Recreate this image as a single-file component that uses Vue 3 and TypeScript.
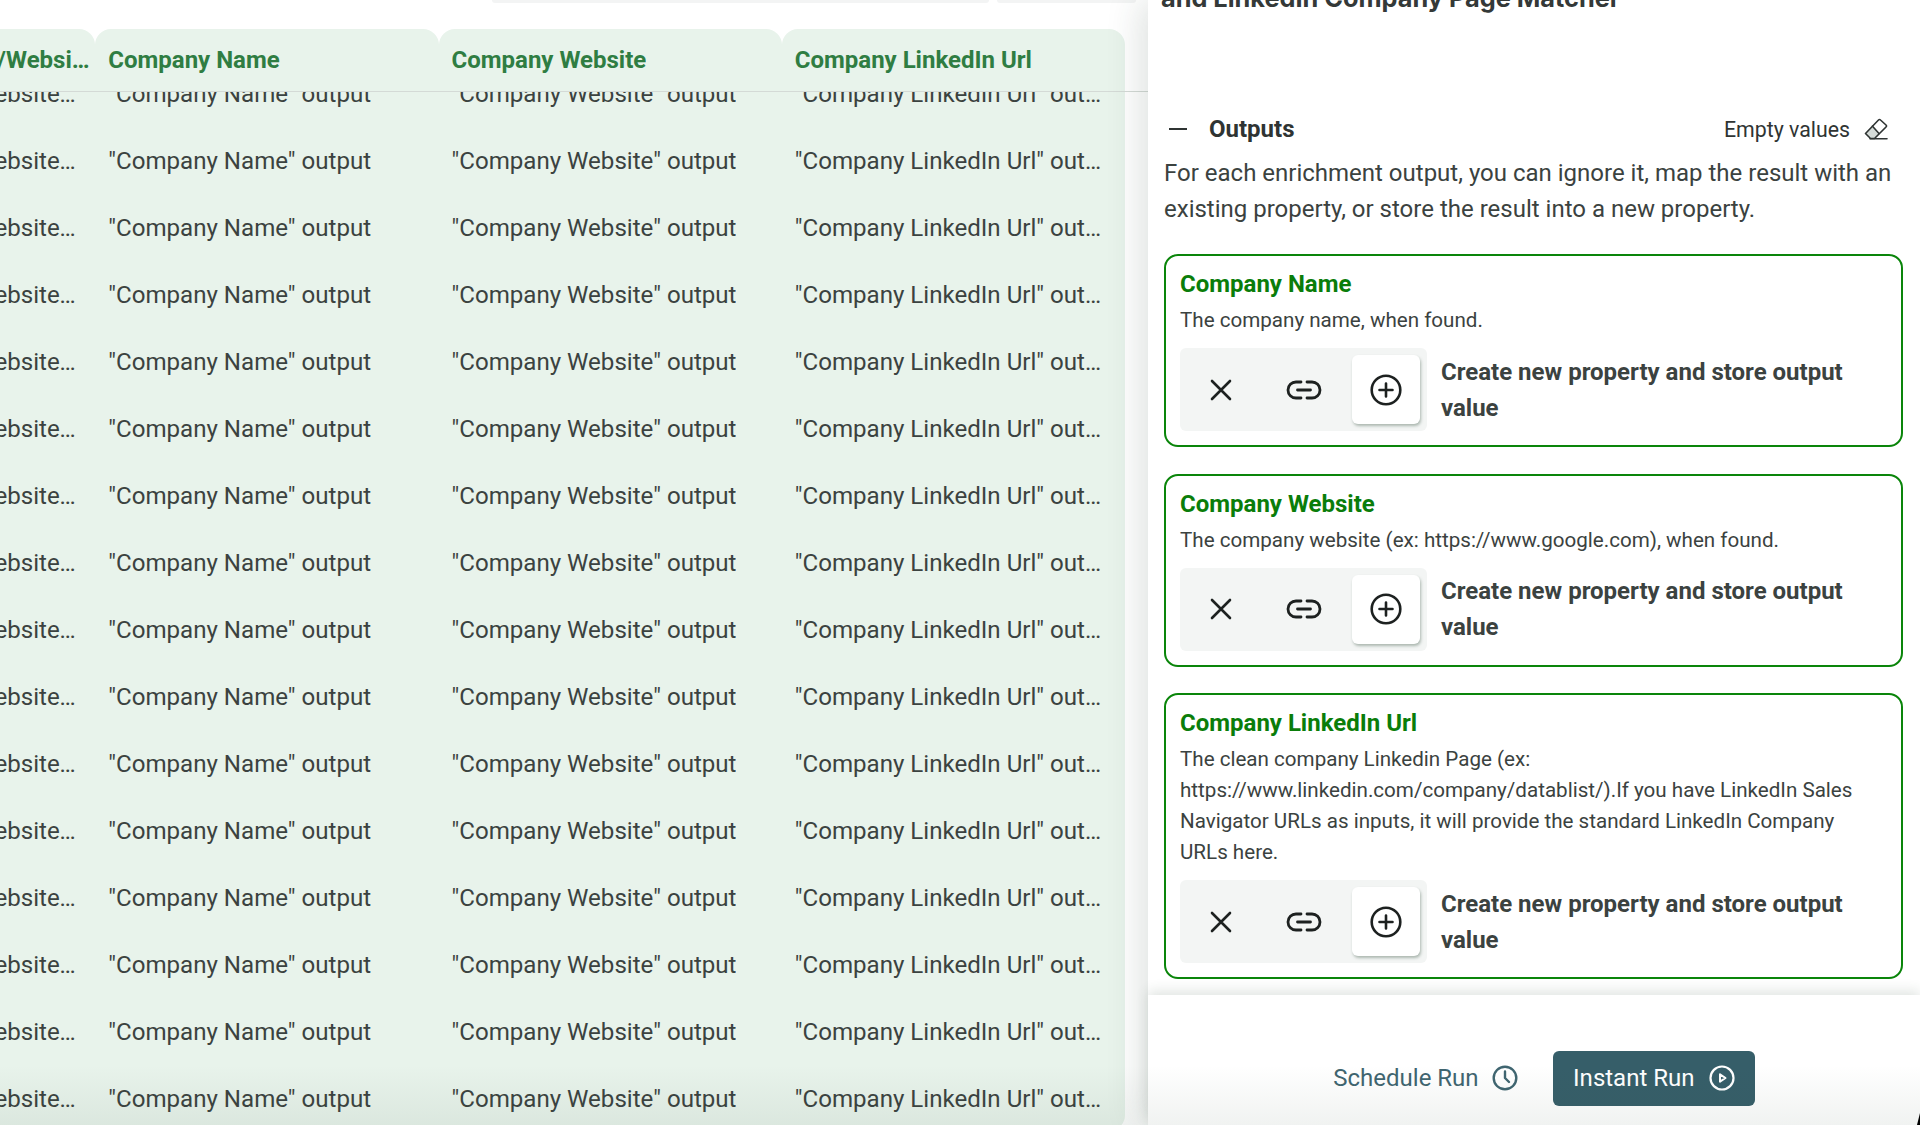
<script setup lang="ts">
const columns = [
  { head: 'Company Uid Domain/Website Address', cell: '"Company Domain/Website" output' },
  { head: 'Company Name', cell: '"Company Name" output' },
  { head: 'Company Website', cell: '"Company Website" output' },
  { head: 'Company LinkedIn Url', cell: '"Company LinkedIn Url" output' },
]
const rows = Array.from({ length: 16 }, (_, i) => i)
const outputs = [
  { title: 'Company Name', desc: 'The company name, when found.' },
  { title: 'Company Website', desc: 'The company website (ex: https://www.google.com), when found.' },
  {
    title: 'Company LinkedIn Url',
    desc: 'The clean company Linkedin Page (ex: https://www.linkedin.com/company/datablist/).If you have LinkedIn Sales Navigator URLs as inputs, it will provide the standard LinkedIn Company URLs here.',
  },
]
</script>

<template>
  <div class="page">
    <section class="left">
      <div class="top-tabs">
        <span class="top-tab one"></span>
        <span class="top-tab two"></span>
      </div>
      <div class="table">
        <div class="head-row">
          <div v-for="c in columns" :key="c.head" class="head-cell">
            <span class="clip head-text">{{ c.head }}</span>
          </div>
        </div>
        <div class="body">
          <div class="body-inner">
            <div v-for="r in rows" :key="r" class="row">
              <div v-for="c in columns" :key="c.head" class="cell">
                <span class="clip">{{ c.cell }}</span>
              </div>
            </div>
          </div>
        </div>
      </div>
    </section>

    <aside class="panel">
      <div class="scroll">
        <h2 class="title">and LinkedIn Company Page Matcher</h2>
        <div class="outputs-head">
          <svg class="minus" width="18" height="4" viewBox="0 0 18 4"><path d="M0 2h18" stroke="#2f3433" stroke-width="2" /></svg>
          <span class="outputs-label">Outputs</span>
          <span class="empty">Empty values</span>
          <svg class="eraser" width="24" height="22" viewBox="0 0 24 22" fill="none">
            <path d="M1.500 15.500 8.500 8.200 15 15.500 10 20.500H6.500z" fill="#d5dbd8" />
            <path d="M1.500 15.500 14.500 2q1-1 2 0L22 7q1 1 0 2L10.500 20.500h-4z" stroke="#2f3433" stroke-width="1.600" stroke-linejoin="round" />
            <path d="m8.500 8.200 6.500 7.300M6 20.700h17" stroke="#2f3433" stroke-width="1.600" stroke-linecap="round" />
          </svg>
        </div>
        <p class="intro">For each enrichment output, you can ignore it, map the result with an existing property, or store the result into a new property.</p>

        <div v-for="o in outputs" :key="o.title" class="card">
          <div class="card-title">{{ o.title }}</div>
          <div class="card-desc">{{ o.desc }}</div>
          <div class="choice">
            <div class="toggle">
              <button class="tbtn" type="button" aria-label="Ignore">
                <svg width="26" height="26" viewBox="0 0 26 26" fill="none"><path d="M4 4l18 18M22 4 4 22" stroke="#1d2120" stroke-width="2.600" stroke-linecap="round" /></svg>
              </button>
              <button class="tbtn" type="button" aria-label="Map">
                <svg width="36" height="24" viewBox="0 0 36 24" fill="none"><path d="M15 4H10a8 8 0 0 0 0 16h5M21 4h5a8 8 0 0 1 0 16h-5M11.500 12h13" stroke="#1d2120" stroke-width="2.800" stroke-linecap="round" /></svg>
              </button>
              <button class="tbtn active" type="button" aria-label="Create">
                <svg width="32" height="32" viewBox="0 0 32 32" fill="none"><circle cx="16" cy="16" r="14.300" stroke="#1d2120" stroke-width="2.600" /><path d="M16 9.500v13M9.500 16h13" stroke="#1d2120" stroke-width="2.600" stroke-linecap="round" /></svg>
              </button>
            </div>
            <div class="choice-text">Create new property and store output value</div>
          </div>
        </div>
      </div>

      <footer class="footer">
        <button class="schedule" type="button">
          Schedule Run
          <svg width="26" height="26" viewBox="0 0 26 26" fill="none"><circle cx="13" cy="13" r="11.300" stroke="#3f6570" stroke-width="2.400" /><path d="M13 6.500V13l4 4" stroke="#3f6570" stroke-width="2.400" stroke-linecap="round" stroke-linejoin="round" /></svg>
        </button>
        <button class="instant" type="button">
          Instant Run
          <svg width="26" height="26" viewBox="0 0 26 26" fill="none"><circle cx="13" cy="13" r="11.500" stroke="#fff" stroke-width="2.200" /><path d="M11 9.300 16.500 13 11 16.700z" stroke="#fff" stroke-width="2" stroke-linejoin="round" /></svg>
        </button>
      </footer>
    </aside>
    <div class="vignette"></div>
    <div class="corner"></div>
  </div>
</template>

<style scoped>
.page {
  position: relative;
  display: flex;
  width: 1920px;
  height: 1125px;
  overflow: hidden;
  background: #fff;
  font-family: Roboto, "Liberation Sans", sans-serif;
  color: #3b4240;
}
.left {
  flex: 0 0 1148px;
  position: relative;
  overflow: hidden;
}
.top-tabs {
  display: flex;
  height: 3px;
  margin-left: 492px;
  gap: 8px;
}
.top-tab {
  display: block;
  height: 3px;
  background: #f3f4f4;
  border-radius: 0 0 6px 6px;
}
.top-tab.one { width: 497px; }
.top-tab.two { width: 139px; }
.table {
  width: 1373px;
  margin: 26px 0 0 -248px;
}
.head-row {
  position: relative;
  z-index: 1;
  display: flex;
  height: 62px;
}
.head-row::after {
  content: "";
  position: absolute;
  left: 0;
  right: -23px;
  bottom: -1px;
  height: 1px;
  background: #d4dad6;
}
.head-cell {
  flex: 0 0 343.25px;
  min-width: 0;
  display: flex;
  align-items: center;
  padding: 0 4px 0 13px;
  box-sizing: border-box;
  background: #e8f3eb;
  border-radius: 16px 16px 0 0;
}
.clip {
  display: block;
  min-width: 0;
  overflow: hidden;
  white-space: nowrap;
  text-overflow: ellipsis;
}
.head-text {
  font-size: 24px;
  font-weight: 700;
  color: #2f7d42;
}
.body {
  height: 1040px;
  overflow: hidden;
  background: #e8f3eb;
  border-radius: 0 0 16px 0;
}
.body-inner {
  margin-top: -31px;
}
.row {
  display: flex;
  height: 67px;
}
.cell {
  flex: 0 0 343.25px;
  min-width: 0;
  display: flex;
  align-items: center;
  box-sizing: border-box;
  padding: 0 17px 0 13px;
  font-size: 24.100px;
}
.panel {
  position: relative;
  z-index: 2;
  flex: 1;
  min-width: 0;
  display: flex;
  flex-direction: column;
  background: #fff;
  box-shadow: -6px 0 34px rgba(40, 60, 50, 0.16);
}
.scroll {
  flex: 0 0 995px;
  overflow: hidden;
  padding: 0 17px 0 16px;
  box-sizing: border-box;
}
.title {
  margin: -17px 0 0 -3px;
  font-family: Inter, Roboto, sans-serif;
  font-size: 25.300px;
  line-height: 29px;
  font-weight: 700;
  color: #343938;
}
.outputs-head {
  display: flex;
  align-items: center;
  height: 30px;
  margin-top: 102px;
  padding-left: 5px;
  font-size: 21.300px;
}
.minus { margin-right: 22px; }
.outputs-label {
  font-size: 24px;
  font-weight: 700;
  color: #2f3433;
}
.empty {
  margin-left: auto;
  margin-right: 14px;
  color: #2f3433;
}
.eraser { margin-right: 15px; }
.intro {
  margin: 11px 0 0;
  font-size: 24px;
  line-height: 36px;
  color: #3b4240;
}
.card {
  margin-top: 27px;
  padding: 13px 14px 14px;
  border: 2px solid #0a850a;
  border-radius: 14px;
  background: #fff;
}
.card + .card { margin-top: 26.500px; }
.card-title {
  font-size: 24px;
  line-height: 30px;
  font-weight: 700;
  color: #0a7d0a;
}
.card-desc {
  margin-top: 6px;
  font-size: 20.600px;
  line-height: 31px;
  color: #3b4240;
}
.choice {
  display: flex;
  align-items: center;
  gap: 14px;
  margin-top: 12px;
}
.toggle {
  flex: none;
  display: flex;
  gap: 14.500px;
  padding: 7px;
  background: #f3f5f4;
  border-radius: 6px;
}
.tbtn {
  width: 68px;
  height: 69px;
  display: flex;
  align-items: center;
  justify-content: center;
  padding: 0;
  border: 0;
  border-radius: 6px;
  background: transparent;
}
.tbtn.active {
  background: #fff;
  box-shadow: 1px 2px 3px rgba(40, 70, 50, 0.35);
}
.choice-text {
  font-size: 24px;
  line-height: 36px;
  font-weight: 700;
  color: #3b4240;
}
.footer {
  flex: 1;
  display: flex;
  align-items: flex-start;
  justify-content: flex-end;
  padding: 56px 165px 0 0;
  gap: 35px;
  background: #fff;
  box-shadow: 0 -4px 12px rgba(40, 70, 50, 0.14);
  position: relative;
}
.schedule, .instant {
  display: flex;
  align-items: center;
  gap: 13px;
  height: 55px;
  padding: 0 0 1px;
  border: 0;
  font: inherit;
  font-size: 24px;
  background: transparent;
  color: #3f6570;
}
.instant {
  gap: 14px;
  padding: 0 20.500px 1px;
  background: #365e69;
  color: #fff;
  border-radius: 6px;
}
.vignette {
  position: absolute;
  z-index: 3;
  left: 0;
  right: 0;
  bottom: 0;
  height: 60px;
  pointer-events: none;
  background: linear-gradient(to bottom, rgba(50, 80, 60, 0), rgba(50, 80, 60, 0.07));
}
.corner {
  position: absolute;
  z-index: 4;
  right: 0;
  bottom: 0;
  width: 3px;
  height: 12px;
  background: #000;
  clip-path: polygon(100% 0, 100% 100%, 0 100%);
}
</style>

<style>
html, body { margin: 0; background: #fff; }
</style>
